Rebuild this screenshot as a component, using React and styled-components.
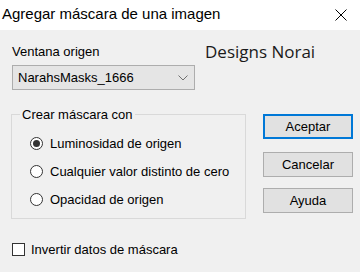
import React from 'react';
import styled, { createGlobalStyle } from 'styled-components';

const GlobalStyle = createGlobalStyle`
  html, body { margin: 0; padding: 0; background: #f0f0f0; }
  body { font-family: "Liberation Sans", Arial, sans-serif; }
`;

const Window = styled.div`
  width: 360px;
  height: 272px;
  background: #f0f0f0;
  display: flex;
  flex-direction: column;
  overflow: hidden;
`;

const TitleBar = styled.div`
  height: 30px;
  background: #fff;
  display: flex;
  align-items: center;
  justify-content: space-between;
  padding: 0 13px 0 2px;
  box-sizing: border-box;
`;

const Title = styled.span`
  font-family: "Liberation Sans", Arial, sans-serif;
  font-size: 15px;
  color: #000;
  margin-top: -3px;
`;

const Body = styled.div`
  display: flex;
  flex-direction: column;
  padding: 0 0 0 11px;
  font-size: 13px;
  color: #000;
`;

const TopRow = styled.div`
  display: flex;
  align-items: flex-start;
  margin-top: 14px;
`;

const SourceBlock = styled.div`
  display: flex;
  flex-direction: column;
  margin-left: 1px;
`;

const Label = styled.span`
  line-height: 15px;
  margin-bottom: 6px;
`;

const Select = styled.div`
  width: 183px;
  height: 25px;
  box-sizing: border-box;
  border: 1px solid #adadad;
  background: #e5e5e5;
  display: flex;
  align-items: center;
  justify-content: space-between;
  padding: 0 6px 0 5px;
`;

const Signature = styled.span`
  font-family: "Open Sans", "Noto Sans", sans-serif;
  font-size: 17px;
  color: #1a1a1a;
  margin-left: 10px;
  margin-top: -4px;
`;

const MiddleRow = styled.div`
  display: flex;
  align-items: flex-start;
  margin-top: 17px;
`;

const Group = styled.fieldset`
  width: 235px;
  height: 112px;
  box-sizing: border-box;
  margin: 0;
  padding: 0 0 0 18px;
  border: 1px solid #d9d9d9;
  display: flex;
  flex-direction: column;
  gap: 13px;
`;

const Legend = styled.legend`
  padding: 0 2px;
  margin-left: -10px;
  line-height: 15px;
`;

const RadioRow = styled.label`
  display: flex;
  align-items: center;
  gap: 7px;
  height: 15px;
  &:first-of-type { margin-top: 14px; }
`;

const RadioCircle = styled.span`
  width: 13px;
  height: 13px;
  box-sizing: border-box;
  border: 1px solid #333;
  border-radius: 50%;
  background: #fff;
  display: flex;
  align-items: center;
  justify-content: center;

  &::after {
    content: '';
    width: 7px;
    height: 7px;
    border-radius: 50%;
    background: ${({ checked }) => (checked ? '#333' : 'transparent')};
  }
`;

const Buttons = styled.div`
  display: flex;
  flex-direction: column;
  gap: 11px;
  margin-left: 17px;
  margin-top: 7px;
`;

const Button = styled.button`
  width: 90px;
  height: 25px;
  margin-bottom: ${({ primary }) => (primary ? '2px' : '0')};
  box-sizing: border-box;
  background: #e1e1e1;
  border: ${({ primary }) => (primary ? '2px solid #0078d7' : '1px solid #adadad')};
  font-family: "Liberation Sans", Arial, sans-serif;
  font-size: 13px;
  color: #000;
  padding: 0;
`;

const CheckRow = styled.label`
  display: flex;
  align-items: center;
  gap: 6px;
  margin-top: 23px;
  margin-left: 1px;
`;

const CheckBox = styled.span`
  width: 13px;
  height: 13px;
  box-sizing: border-box;
  border: 1px solid #333;
  background: #fff;
`;

const options = [
  { text: 'Luminosidad de origen', checked: true },
  { text: 'Cualquier valor distinto de cero', checked: false },
  { text: 'Opacidad de origen', checked: false },
];

export default function App() {
  return (
    <Window>
      <GlobalStyle />
      <TitleBar>
        <Title>Agregar máscara de una imagen</Title>
        <svg width="12" height="12" viewBox="0 0 12 12">
          <path d="M0.5 0.5 L11.5 11.5 M11.5 0.5 L0.5 11.5" stroke="#000" strokeWidth="1" />
        </svg>
      </TitleBar>
      <Body>
        <TopRow>
          <SourceBlock>
            <Label>Ventana origen</Label>
            <Select>
              <span>NarahsMasks_1666</span>
              <svg width="10" height="6" viewBox="0 0 10 6">
                <path d="M0.5 0.5 L5 5 L9.5 0.5" fill="none" stroke="#707070" strokeWidth="1" />
              </svg>
            </Select>
          </SourceBlock>
          <Signature>Designs Norai</Signature>
        </TopRow>
        <MiddleRow>
          <Group>
            <Legend>Crear máscara con</Legend>
            {options.map((o) => (
              <RadioRow key={o.text}>
                <RadioCircle checked={o.checked} />
                {o.text}
              </RadioRow>
            ))}
          </Group>
          <Buttons>
            <Button primary>Aceptar</Button>
            <Button>Cancelar</Button>
            <Button>Ayuda</Button>
          </Buttons>
        </MiddleRow>
        <CheckRow>
          <CheckBox />
          Invertir datos de máscara
        </CheckRow>
      </Body>
    </Window>
  );
}
